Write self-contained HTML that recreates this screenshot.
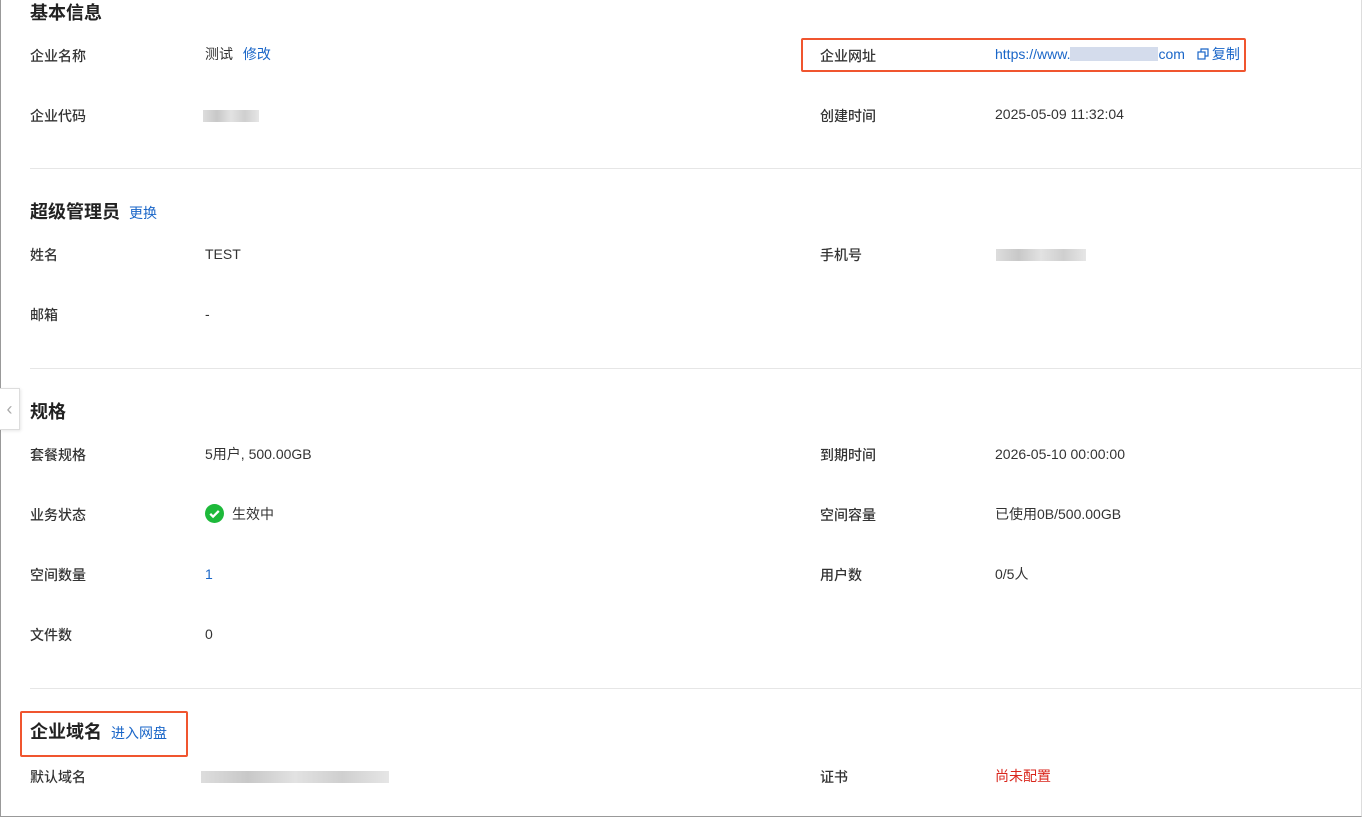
<!DOCTYPE html><html><head><meta charset="utf-8"><style>
body{margin:0;width:1362px;height:818px;overflow:hidden;background:#fff;font-family:"Liberation Sans","Noto Sans CJK SC",sans-serif;font-size:14px;color:#333;position:relative}
.frame{position:absolute;left:0;top:0;width:1360px;height:816px;border:1px solid #999;border-top:none;border-right:1px solid #ddd}
.a{position:absolute;white-space:nowrap;line-height:20px}
.t{font-size:18px;font-weight:bold;color:#222;line-height:24px}
.l{color:#333;font-weight:500}
.b{color:#1a66c8}
.hr{position:absolute;left:30px;right:0;height:1px;background:#e6e6e6}
.box{position:absolute;border:2px solid #f0552f;border-radius:2px}
.blur{position:absolute;height:12px;background:linear-gradient(90deg,#ddd,#c8c8c8,#e2e2e2,#cfcfcf,#e6e6e6)}
</style></head><body>
<div class="frame"></div>
<div class="a t" style="left:30px;top:1px">基本信息</div>
<div class="a l" style="left:30px;top:46px">企业名称</div>
<div class="a" style="left:205px;top:44px">测试 <span class="b" style="margin-left:6px">修改</span></div>
<div class="a l" style="left:820px;top:46px">企业网址</div>
<div class="a b" style="left:995px;top:44px">https://www.<span style="display:inline-block;width:88px;height:14px;background:#d4dcec;vertical-align:-2px"></span>com<svg width="12" height="12" viewBox="0 0 12 12" style="margin:0 3px 0 12px;vertical-align:-1px"><rect x="1" y="4" width="7" height="7" fill="none" stroke="#1a66c8" stroke-width="1.2"/><path d="M4 4V1h7v7H8" fill="none" stroke="#1a66c8" stroke-width="1.2"/></svg>复制</div>
<div class="box" style="left:801px;top:38px;width:441px;height:30px"></div>
<div class="a l" style="left:30px;top:106px">企业代码</div>
<div class="blur" style="left:203px;top:110px;width:56px"></div>
<div class="a l" style="left:820px;top:106px">创建时间</div>
<div class="a" style="left:995px;top:104px">2025-05-09 11:32:04</div>
<div class="hr" style="top:168px"></div>
<div class="a t" style="left:30px;top:200px">超级管理员 <span class="b" style="font-size:14px;font-weight:normal;margin-left:4px">更换</span></div>
<div class="a l" style="left:30px;top:245px">姓名</div>
<div class="a" style="left:205px;top:244px">TEST</div>
<div class="a l" style="left:820px;top:245px">手机号</div>
<div class="blur" style="left:996px;top:249px;width:90px"></div>
<div class="a l" style="left:30px;top:305px">邮箱</div>
<div class="a" style="left:205px;top:304px">-</div>
<div class="hr" style="top:368px"></div>
<div style="position:absolute;left:0;top:388px;width:19px;height:40px;border:1px solid #ddd;border-left:none;background:#fff;box-shadow:1px 1px 3px rgba(0,0,0,.1);color:#aaa;font-size:18px;line-height:40px;text-align:center">‹</div>
<div class="a t" style="left:30px;top:400px">规格</div>
<div class="a l" style="left:30px;top:445px">套餐规格</div>
<div class="a" style="left:205px;top:444px">5用户, 500.00GB</div>
<div class="a l" style="left:820px;top:445px">到期时间</div>
<div class="a" style="left:995px;top:444px">2026-05-10 00:00:00</div>
<div class="a l" style="left:30px;top:505px">业务状态</div>
<div class="a" style="left:205px;top:504px"><svg width="19" height="19" viewBox="0 0 20 20" style="vertical-align:-4px;margin-right:8px"><circle cx="10" cy="10" r="10" fill="#1db93a"/><path d="M5.5 10.3l3 3 6-6" stroke="#fff" stroke-width="2.4" fill="none"/></svg>生效中</div>
<div class="a l" style="left:820px;top:505px">空间容量</div>
<div class="a" style="left:995px;top:504px">已使用0B/500.00GB</div>
<div class="a l" style="left:30px;top:565px">空间数量</div>
<div class="a b" style="left:205px;top:564px">1</div>
<div class="a l" style="left:820px;top:565px">用户数</div>
<div class="a" style="left:995px;top:564px">0/5人</div>
<div class="a l" style="left:30px;top:625px">文件数</div>
<div class="a" style="left:205px;top:624px">0</div>
<div class="hr" style="top:688px"></div>
<div class="a t" style="left:30px;top:720px">企业域名 <span class="b" style="font-size:14px;font-weight:normal;margin-left:4px">进入网盘</span></div>
<div class="box" style="left:20px;top:711px;width:164px;height:42px"></div>
<div class="a l" style="left:30px;top:767px">默认域名</div>
<div class="blur" style="left:201px;top:771px;width:188px"></div>
<div class="a l" style="left:820px;top:767px">证书</div>
<div class="a" style="left:995px;top:766px;color:#d9261c">尚未配置</div>
</body></html>
